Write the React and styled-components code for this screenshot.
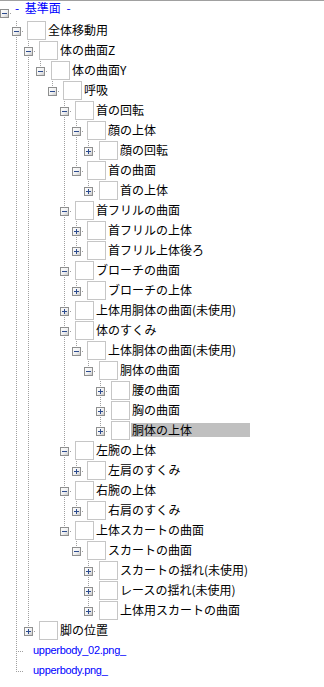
import styled, { createGlobalStyle, css } from "styled-components";

const GlobalStyle = createGlobalStyle`
  html, body {
    margin: 0;
    padding: 0;
    background: #ffffff;
  }
`;

const DOT = "#a0a0a0";
const dotsV = `repeating-linear-gradient(to bottom, ${DOT} 0 1px, transparent 1px 2px)`;
const dotsH = `repeating-linear-gradient(to right, ${DOT} 0 1px, transparent 1px 2px)`;

const n = (label, opts = {}, children = []) => ({ label, ...opts, children });

const tree = n("- 基準面 -", { blue: true, root: true }, [
  n("全体移動用", {}, [
    n("体の曲面Z", {}, [
      n("体の曲面Y", {}, [
        n("呼吸", {}, [
          n("首の回転", {}, [
            n("顔の上体", {}, [n("顔の回転")]),
            n("首の曲面", {}, [n("首の上体")]),
          ]),
          n("首フリルの曲面", {}, [n("首フリルの上体"), n("首フリル上体後ろ")]),
          n("ブローチの曲面", {}, [n("ブローチの上体")]),
          n("上体用胴体の曲面(未使用)"),
          n("体のすくみ", {}, [
            n("上体胴体の曲面(未使用)", {}, [
              n("胴体の曲面", {}, [
                n("腰の曲面"),
                n("胸の曲面"),
                n("胴体の上体", { selected: true }),
              ]),
            ]),
          ]),
          n("左腕の上体", {}, [n("左肩のすくみ")]),
          n("右腕の上体", {}, [n("右肩のすくみ")]),
          n("上体スカートの曲面", {}, [
            n("スカートの曲面", {}, [
              n("スカートの揺れ(未使用)"),
              n("レースの揺れ(未使用)"),
              n("上体用スカートの曲面"),
            ]),
          ]),
        ]),
      ]),
    ]),
    n("脚の位置"),
  ]),
  n("upperbody_02.png_", { file: true, blue: true }),
  n("upperbody.png_", { file: true, blue: true }),
]);

// flatten the tree into rows with the guide lines each row needs
const flatten = (node, level = 0, guides = [], last = true, out = []) => {
  out.push({ node, level, guides, last });
  node.children.forEach((child, i) => {
    const childLast = i === node.children.length - 1;
    flatten(child, level + 1, level === 0 ? [false] : [...guides, !last], childLast, out);
  });
  return out;
};

const rows = flatten(tree);

const Tree = styled.div`
  width: 324px;
  height: 687px;
  overflow: hidden;
  box-sizing: border-box;
  border-top: 1px solid #a0a0a0;
  background: #ffffff;
  font-family: "Noto Sans CJK JP", "Noto Sans", sans-serif;
  font-size: 12px;
  color: #000000;
`;

const Row = styled.div`
  display: flex;
  align-items: flex-start;
  height: 20px;
  white-space: nowrap;
`;

const Guide = styled.span`
  flex: none;
  width: 12px;
  height: 20px;
  ${(p) =>
    p.$line &&
    css`
      background: ${dotsV} 4px 0 / 1px 20px no-repeat;
    `}
`;

const Elbow = styled.span`
  flex: none;
  display: flex;
  width: 12px;
  height: 20px;
  background: ${(p) =>
    p.$root
      ? `${dotsH} 4px 12px / 8px 1px no-repeat`
      : `${dotsH} 4px 10px / 8px 1px no-repeat, ${dotsV} 4px 0 / 1px ${p.$last ? 11 : 20}px no-repeat`};
`;

const ToggleBox = styled.svg`
  display: block;
  flex: none;
  margin-top: ${(p) => (p.$root ? 8 : 6)}px;
`;

const NodeIcon = styled.span`
  flex: none;
  width: 19px;
  height: 19px;
  margin-left: 3px;
  box-sizing: border-box;
  border: 1px solid #c6c6c6;
  background: #ffffff;
`;

const Label = styled.span`
  display: block;
  height: 14px;
  line-height: 14px;
  margin-top: 2px;
  margin-left: 1px;
  padding: 0 1px;
  color: ${(p) => (p.$blue ? "#0000ff" : "#000000")};
  ${(p) =>
    p.$selected &&
    css`
      width: 117px;
      background: #c0c0c0;
    `}
  ${(p) =>
    p.$root &&
    css`
      margin-top: 0;
      margin-left: 2px;
      word-spacing: 3px;
    `}
  ${(p) =>
    p.$file &&
    css`
      margin-left: 8px;
      font-family: "Liberation Sans", Arial, sans-serif;
      font-size: 11px;
      letter-spacing: -0.3px;
    `}
`;

const Toggle = ({ open, root }) => (
  <ToggleBox $root={root} width="9" height="9" viewBox="0 0 9 9">
    <defs>
      <linearGradient id="toggleFill" x1="0" y1="0" x2="1" y2="1">
        <stop offset="0" stopColor="#ffffff" />
        <stop offset="0.55" stopColor="#f0f0f0" />
        <stop offset="1" stopColor="#c4c4c4" />
      </linearGradient>
    </defs>
    <rect x="0.5" y="0.5" width="8" height="8" fill="url(#toggleFill)" stroke="#8e8f8f" />
    <path d="M2 4.5h5" stroke="#2c4b8e" strokeWidth="1" />
    {!open && <path d="M4.5 2v5" stroke="#2c4b8e" strokeWidth="1" />}
  </ToggleBox>
);

const TreeRow = ({ row }) => {
  const { node, guides, last } = row;
  const open = node.children.length > 0;
  return (
    <Row>
      {guides.map((line, i) => (
        <Guide key={i} $line={line} />
      ))}
      <Elbow $root={node.root} $last={last}>
        {!node.file && <Toggle open={open} root={node.root} />}
      </Elbow>
      {!node.root && !node.file && <NodeIcon />}
      <Label $blue={node.blue} $selected={node.selected} $root={node.root} $file={node.file}>
        {node.label}
      </Label>
    </Row>
  );
};

const App = () => (
  <>
    <GlobalStyle />
    <Tree>
      {rows.map((row, i) => (
        <TreeRow key={i} row={row} />
      ))}
    </Tree>
  </>
);

export default App;
